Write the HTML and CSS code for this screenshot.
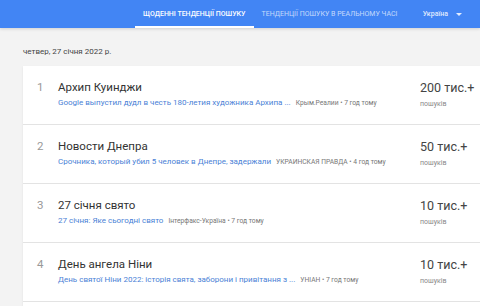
FILE: index.html
```html
<!DOCTYPE html>
<html lang="uk">

<head>
    <meta charset="UTF-8">
    <title>Щоденні тенденції пошуку</title>
    <link rel="stylesheet" href="styles.css">
</head>

<body>

    <header>
        <nav class="tabs">
            <a href="#" class="tab active">ЩОДЕННІ ТЕНДЕНЦІЇ ПОШУКУ</a>
            <a href="#" class="tab">ТЕНДЕНЦІЇ ПОШУКУ В РЕАЛЬНОМУ ЧАСІ</a>
        </nav>
        <div class="geo">
            <span>Україна</span>
            <span class="caret"></span>
        </div>
    </header>

    <main>
        <p class="date">четвер, 27 січня 2022 р.</p>

        <div class="card">
            <div class="row">
                <div class="num">1</div>
                <div class="details">
                    <div class="title">Архип Куинджи</div>
                    <div class="sub">
                        <a href="#">Google выпустил дудл в честь 180-летия художника Архипа ...</a>
                        <span class="source">Крым.Реалии • 7 год тому</span>
                    </div>
                </div>
                <div class="count">
                    <div class="value">200 тис.+</div>
                    <div class="label">пошуків</div>
                </div>
            </div>

            <div class="row">
                <div class="num">2</div>
                <div class="details">
                    <div class="title">Новости Днепра</div>
                    <div class="sub">
                        <a href="#">Срочника, который убил 5 человек в Днепре, задержали</a>
                        <span class="source">УКРАИНСКАЯ ПРАВДА • 4 год тому</span>
                    </div>
                </div>
                <div class="count">
                    <div class="value">50 тис.+</div>
                    <div class="label">пошуків</div>
                </div>
            </div>

            <div class="row">
                <div class="num">3</div>
                <div class="details">
                    <div class="title">27 січня свято</div>
                    <div class="sub">
                        <a href="#">27 січня: Яке сьогодні свято</a>
                        <span class="source">Інтерфакс-Україна • 7 год тому</span>
                    </div>
                </div>
                <div class="count">
                    <div class="value">10 тис.+</div>
                    <div class="label">пошуків</div>
                </div>
            </div>

            <div class="row">
                <div class="num">4</div>
                <div class="details">
                    <div class="title">День ангела Ніни</div>
                    <div class="sub">
                        <a href="#">День святої Ніни 2022: історія свята, заборони і привітання з ...</a>
                        <span class="source">УНІАН • 7 год тому</span>
                    </div>
                </div>
                <div class="count">
                    <div class="value">10 тис.+</div>
                    <div class="label">пошуків</div>
                </div>
            </div>

            <div class="row-more"></div>
        </div>
    </main>

</body>

</html>
```

FILE: styles.css
```css
* {
    margin: 0;
    padding: 0;
    box-sizing: border-box;
    font-family: Roboto, 'Liberation Sans', sans-serif;
}

body {
    background: #f3f3f3;
    color: #333;
    width: 480px;
    height: 306px;
    overflow: hidden;
}

header {
    display: flex;
    align-items: stretch;
    height: 28px;
    background: #4285f4;
    box-shadow: 0 1px 3px rgba(0, 0, 0, 0.15);
}

.tabs {
    display: flex;
    margin-left: 135px;
}

.tab {
    display: flex;
    align-items: center;
    padding: 2px 8px 0;
    font-size: 7px;
    text-decoration: none;
    color: rgba(255, 255, 255, 0.7);
    border-bottom: 2px solid transparent;
    white-space: nowrap;
}

.tab.active {
    color: #fff;
    font-weight: 500;
    border-bottom-color: #fff;
}

.geo {
    display: flex;
    align-items: center;
    gap: 8px;
    margin-left: auto;
    padding-right: 18px;
    font-size: 7px;
    font-weight: 500;
    color: rgba(255, 255, 255, 0.85);
}

.caret {
    width: 0;
    height: 0;
    border-left: 3px solid transparent;
    border-right: 3px solid transparent;
    border-top: 3px solid rgba(255, 255, 255, 0.85);
}

main {
    padding-left: 23px;
}

.date {
    font-size: 8px;
    color: #444;
    padding: 19px 0 10px;
}

.card {
    background: #fff;
    box-shadow: 0 1px 2px rgba(0, 0, 0, 0.08);
}

.row {
    display: flex;
    align-items: flex-start;
    height: 59px;
    border-bottom: 1px solid #e3e3e3;
}

.row-more {
    height: 4px;
}

.num {
    width: 35px;
    padding: 14px 0 0 14px;
    font-size: 11.5px;
    line-height: 15px;
    color: #999;
}

.details {
    flex: 1;
    padding-top: 14px;
}

.title {
    font-size: 11.5px;
    color: #333;
    line-height: 15px;
}

.sub {
    margin-top: 3px;
    font-size: 8px;
    line-height: 10px;
    white-space: nowrap;
}

.sub a {
    color: #4a7fd6;
    text-decoration: none;
    margin-right: 3px;
}

.source {
    color: #777;
    font-size: 6.7px;
}

.count {
    width: 60px;
    padding-top: 14px;
    white-space: nowrap;
}

.value {
    font-size: 12.5px;
    color: #444;
    line-height: 16px;
}

.label {
    margin-top: 4px;
    font-size: 7px;
    line-height: 9px;
    color: #888;
}
```
